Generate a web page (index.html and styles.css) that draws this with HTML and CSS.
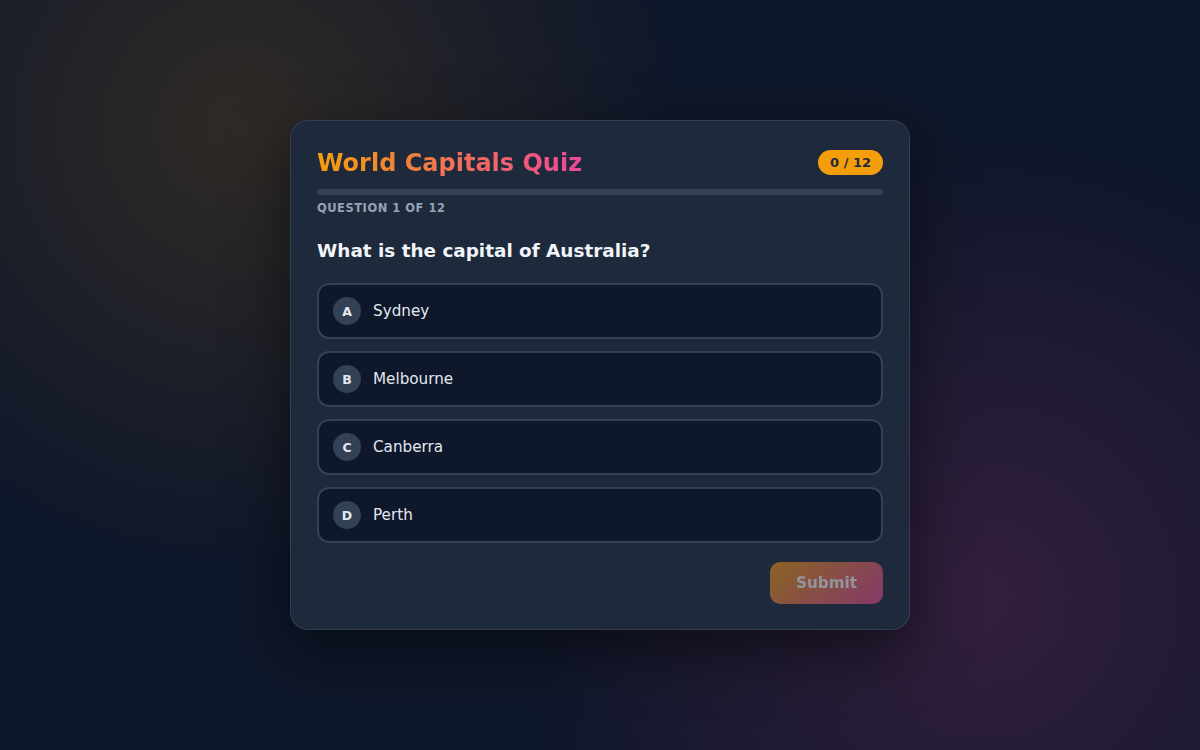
FILE: index.html
```html
<!DOCTYPE html>
<html lang="en">
<head>
<meta charset="utf-8">
<title>World Capitals Quiz</title>
<link rel="stylesheet" href="styles.css">
</head>
<body>
<main class="card">
  <header class="card-head">
    <h1 class="title">World Capitals Quiz</h1>
    <span class="score">0 / 12</span>
  </header>
  <div class="progress"><div class="progress-fill" style="width:0%"></div></div>
  <div class="qlabel">Question 1 of 12</div>
  <h2 class="question">What is the capital of Australia?</h2>
  <ul class="options">
    <li class="option"><span class="letter">A</span><span class="otext">Sydney</span></li>
    <li class="option"><span class="letter">B</span><span class="otext">Melbourne</span></li>
    <li class="option"><span class="letter">C</span><span class="otext">Canberra</span></li>
    <li class="option"><span class="letter">D</span><span class="otext">Perth</span></li>
  </ul>
  <div class="actions"><button class="submit" disabled>Submit</button></div>
</main>
</body>
</html>
```
FILE: styles.css
```css
* { box-sizing: border-box; }
html, body { height: 100%; }
body {
  margin: 0;
  font-family: "DejaVu Sans", sans-serif;
  background:
    radial-gradient(circle at 20% 17%, rgba(245,158,11,0.14), transparent 38%),
    radial-gradient(circle at 82% 80%, rgba(236,72,153,0.16), transparent 40%),
    #0f172a;
  display: flex;
  align-items: center;
  justify-content: center;
  color: #e2e8f0;
}
.card {
  width: 620px;
  background: #1e293b;
  border: 1px solid rgba(148,163,184,0.18);
  border-radius: 18px;
  padding: 27px 26px 25px;
  box-shadow: 0 20px 60px rgba(0,0,0,0.5);
}
.card-head {
  display: flex;
  align-items: flex-start;
  justify-content: space-between;
  height: 30px;
}
.title {
  margin: 0;
  font-size: 24px;
  font-weight: 700;
  background: linear-gradient(90deg, #f59e0b, #ec4899);
  -webkit-background-clip: text;
  background-clip: text;
  color: transparent;
  line-height: 30px;
}
.score {
  margin-top: 2px;
  background: #f59e0b;
  color: #1e293b;
  font-size: 13px;
  font-weight: 700;
  padding: 0 12px;
  height: 25px;
  line-height: 25px;
  border-radius: 13px;
}
.progress {
  margin-top: 11px;
  height: 6px;
  background: #334155;
  border-radius: 3px;
  overflow: hidden;
}
.progress-fill { height: 100%; background: linear-gradient(90deg, #f59e0b, #ec4899); }
.qlabel {
  margin-top: 6px;
  font-size: 11.5px;
  font-weight: 700;
  letter-spacing: 0.5px;
  text-transform: uppercase;
  color: #94a3b8;
  line-height: 14px;
}
.question {
  margin: 25px 0 0;
  font-size: 18.4px;
  font-weight: 700;
  color: #f1f5f9;
  line-height: 22px;
}
.options {
  list-style: none;
  margin: 21px 0 0;
  padding: 0;
  display: flex;
  flex-direction: column;
  gap: 12px;
}
.option {
  height: 56px;
  display: flex;
  align-items: center;
  gap: 12px;
  padding: 0 14px;
  background: #0f172a;
  border: 2px solid #334155;
  border-radius: 12px;
}
.letter {
  width: 28px;
  height: 28px;
  border-radius: 50%;
  background: #334155;
  color: #e2e8f0;
  font-size: 12.5px;
  font-weight: 700;
  display: flex;
  align-items: center;
  justify-content: center;
}
.otext { font-size: 15.2px; color: #e2e8f0; }
.actions {
  margin-top: 19px;
  display: flex;
  justify-content: flex-end;
}
.submit {
  width: 113px;
  height: 42px;
  border: none;
  border-radius: 10px;
  background: linear-gradient(135deg, #f59e0b, #ec4899);
  color: #ffffff;
  font-family: "DejaVu Sans", sans-serif;
  font-size: 15.2px;
  font-weight: 700;
  opacity: 0.5;
}
```
